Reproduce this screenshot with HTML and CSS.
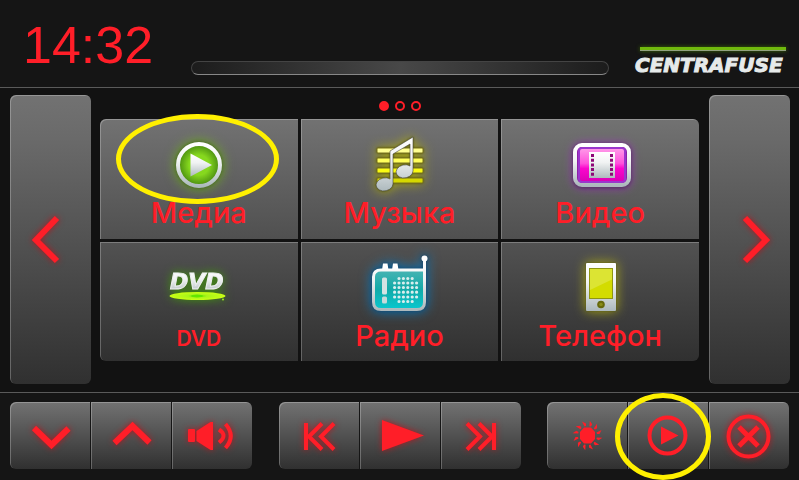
FILE: index.html
```html
<!DOCTYPE html>
<html lang="ru">
<head>
    <meta charset="UTF-8">
    <meta name="viewport" content="width=device-width, initial-scale=1.0">
    <title>Centrafuse</title>
    <link rel="stylesheet" href="styles.css">
</head>
<body>

    <svg class="defs" width="0" height="0" aria-hidden="true">
        <defs>
            <linearGradient id="silver" x1="0" y1="0" x2="0" y2="1">
                <stop offset="0" stop-color="#fff"/>
                <stop offset="0.4" stop-color="#f1f3f3"/>
                <stop offset="1" stop-color="#adb9bd"/>
            </linearGradient>
            <radialGradient id="green">
                <stop offset="0.5" stop-color="#86d81e"/>
                <stop offset="1" stop-color="#4c9011"/>
            </radialGradient>
            <linearGradient id="pink" x1="0" y1="0" x2="0" y2="1">
                <stop offset="0" stop-color="#ff9de9"/>
                <stop offset="0.45" stop-color="#ff52dc"/>
                <stop offset="0.6" stop-color="#fb06cc"/>
                <stop offset="1" stop-color="#d900b5"/>
            </linearGradient>
            <linearGradient id="teal" x1="0" y1="0" x2="0" y2="1">
                <stop offset="0" stop-color="#67b9b9"/>
                <stop offset="0.6" stop-color="#12aaa8"/>
                <stop offset="1" stop-color="#08c8cf"/>
            </linearGradient>
            <radialGradient id="disc">
                <stop offset="0.1" stop-color="#62e600"/>
                <stop offset="0.35" stop-color="#a9f51a"/>
                <stop offset="1" stop-color="#caff14"/>
            </radialGradient>
        </defs>
    </svg>

    <header class="header">
        <time class="clock">14:32</time>
        <div class="progress"></div>
        <div class="logo">CENTRAFUSE</div>
    </header>

    <main class="main">
        <button type="button" class="side" aria-label="Назад">
            <svg class="glow" width="81" height="60" viewBox="0 0 81 60"><path d="M47 8 26 30 47 51" fill="none" stroke="#ff1e28" stroke-width="6"/></svg>
        </button>

        <div class="center">
            <div class="dots">
                <span class="dot active"></span>
                <span class="dot"></span>
                <span class="dot"></span>
            </div>
            <div class="tiles">
                <button type="button" class="tile">
                    <svg class="icon-green" width="100" height="78" viewBox="0 0 100 78">
                        <circle cx="50" cy="46" r="20" fill="url(#green)"/>
                        <circle cx="50" cy="46" r="21" fill="none" stroke="url(#silver)" stroke-width="4"/>
                        <path d="M41.5 34.5 63 46 41.5 57.5z" fill="url(#silver)"/>
                    </svg>
                    <span class="label">Медиа</span>
                    <span class="mark mark-media"></span>
                </button>
                <button type="button" class="tile">
                    <svg class="icon-yellow" width="100" height="78" viewBox="0 0 100 78">
                        <g stroke="#77701c" stroke-width="1">
                            <rect x="28" y="29" width="46" height="5" rx="1" fill="#ffff91"/>
                            <rect x="28" y="39" width="46" height="5" rx="1" fill="#ffff5c"/>
                            <rect x="28" y="49" width="46" height="5" rx="1" fill="#f9fb12"/>
                            <rect x="28" y="59" width="46" height="5" rx="1" fill="#d5d800"/>
                        </g>
                        <path d="M41 32 64 18V52A8.5 6.5 -10 1 1 61 47V25L44 35V65A8.5 6.5 -10 1 1 41 60z" fill="url(#silver)" stroke="#4a4a3c" stroke-opacity="0.6" stroke-width="1"/>
                    </svg>
                    <span class="label">Музыка</span>
                </button>
                <button type="button" class="tile">
                    <svg class="icon-violet" width="100" height="78" viewBox="0 0 100 78">
                        <rect x="25" y="26" width="54" height="40" rx="7" fill="#8d1fa8" stroke="url(#silver)" stroke-width="4"/>
                        <rect x="29" y="29" width="46" height="34" rx="3" fill="url(#pink)" stroke="#9b35cc" stroke-width="2"/>
                        <rect x="39" y="33" width="26" height="26" fill="url(#silver)"/>
                        <path d="M42.5 35V58M61.5 35V58" stroke="#8e0877" stroke-width="3" stroke-dasharray="3 1.7"/>
                    </svg>
                    <span class="label">Видео</span>
                </button>
                <button type="button" class="tile">
                    <svg class="icon-lime" width="100" height="78" viewBox="0 0 100 78">
                        <ellipse cx="48.5" cy="54" rx="28" ry="4" fill="url(#disc)"/>
                        <ellipse cx="48" cy="54" rx="6" ry="1.5" fill="#62e600"/>
                        <circle cx="74" cy="57.5" r="1" fill="#9df01d"/>
                        <text class="dvd-text" x="21" y="47">DVD</text>
                    </svg>
                    <span class="label label-small">DVD</span>
                </button>
                <button type="button" class="tile">
                    <svg class="icon-blue" width="100" height="78" viewBox="0 0 100 78">
                        <path d="M33 28 34 21.5H38.5L39.5 28zM43 28 44 21.5H48.5L49.5 28z" fill="#fff"/>
                        <path d="M75.5 28H32Q24.5 28 24.5 35V60Q24.5 67.5 32 67.5H68Q75.5 67.5 75.5 60V17" fill="url(#teal)" stroke="url(#silver)" stroke-width="3"/>
                        <circle cx="75.5" cy="16.5" r="3" fill="#fff"/>
                        <rect x="33" y="35.5" width="5" height="17" rx="1.5" fill="#d3e3e3"/>
                        <rect x="33" y="54.5" width="5" height="7" rx="1.5" fill="#c5dada"/>
                        <path d="M50 36.5H64M45.6 41H68.2M45.6 45.5H68.2M45.6 50.2H68.2M45.6 55H68.2M50 59.5H64" fill="none" stroke="#d9eeee" stroke-width="3.2" stroke-linecap="round" stroke-dasharray="0 4.4"/>
                    </svg>
                    <span class="label">Радио</span>
                </button>
                <button type="button" class="tile">
                    <svg class="icon-yellow" width="100" height="78" viewBox="0 0 100 78">
                        <rect x="36" y="21" width="30" height="48" rx="1" fill="url(#silver)"/>
                        <rect x="39.5" y="26.5" width="23" height="30" fill="#d3dc00" stroke="#8f9610" stroke-width="1"/>
                        <path d="M40 27H62V37.5L40 48z" fill="#dce433"/>
                        <circle cx="51" cy="62.5" r="3.8" fill="#66690c"/>
                        <circle cx="51" cy="62.5" r="1.8" fill="#8a8d18"/>
                    </svg>
                    <span class="label">Телефон</span>
                </button>
            </div>
        </div>

        <button type="button" class="side" aria-label="Вперёд">
            <svg class="glow" width="81" height="60" viewBox="0 0 81 60"><path d="M36 8 57 30 36 51" fill="none" stroke="#ff1e28" stroke-width="6"/></svg>
        </button>
    </main>

    <footer class="footer">
        <div class="group">
            <button type="button" class="btn" aria-label="Тише">
                <svg class="glow" width="80" height="67" viewBox="0 0 80 67"><path d="M24 26 41.5 43 58.5 26.5" fill="none" stroke="#ff1e28" stroke-width="6"/></svg>
            </button>
            <button type="button" class="btn" aria-label="Громче">
                <svg class="glow" width="80" height="67" viewBox="0 0 80 67"><path d="M23.5 41 41.5 24 58.5 40.5" fill="none" stroke="#ff1e28" stroke-width="6"/></svg>
            </button>
            <button type="button" class="btn" aria-label="Звук">
                <svg class="glow" width="80" height="67" viewBox="0 0 80 67">
                    <rect x="16" y="27" width="7" height="13" rx="1" fill="#ff1e28"/>
                    <path d="M24.5 29 38.5 20H41V48H38.5L24.5 39z" fill="#ff1e28"/>
                    <path d="M47 27.5Q56 33.5 47 40.5" fill="none" stroke="#ff1e28" stroke-width="4"/>
                    <path d="M53.5 22Q64 34 53.5 46" fill="none" stroke="#ff1e28" stroke-width="4"/>
                </svg>
            </button>
        </div>
        <div class="group">
            <button type="button" class="btn" aria-label="Предыдущий">
                <svg class="glow" width="80" height="67" viewBox="0 0 80 67">
                    <path d="M27 21V48M43 21.5 30 34.5 43 47.5M55 21.5 42 34.5 55 47.5" fill="none" stroke="#ff1e28" stroke-width="4"/>
                </svg>
            </button>
            <button type="button" class="btn" aria-label="Воспроизвести">
                <svg class="glow" width="80" height="67" viewBox="0 0 80 67"><path d="M22 18 64 33.5 22 49z" fill="#ff1e28"/></svg>
            </button>
            <button type="button" class="btn" aria-label="Следующий">
                <svg class="glow" width="80" height="67" viewBox="0 0 80 67">
                    <path d="M53 21V48M38 21.5 51 34.5 38 47.5M26 21.5 39 34.5 26 47.5" fill="none" stroke="#ff1e28" stroke-width="4"/>
                </svg>
            </button>
        </div>
        <div class="group">
            <button type="button" class="btn" aria-label="Яркость">
                <svg width="80" height="67" viewBox="0 0 80 67" fill="#ff1e28">
                    <path d="M37 25.5H44L48 30V37L44 41.5H37L33 37V30z"/>
                    <g transform="translate(40.5 33.5)">
                        <path id="ray" d="M-5.5-14-1.5-12-1.5-9.5-3-9z"/>
                        <use href="#ray" transform="rotate(30)"/>
                        <use href="#ray" transform="rotate(60)"/>
                        <use href="#ray" transform="rotate(90)"/>
                        <use href="#ray" transform="rotate(120)"/>
                        <use href="#ray" transform="rotate(150)"/>
                        <use href="#ray" transform="rotate(180)"/>
                        <use href="#ray" transform="rotate(210)"/>
                        <use href="#ray" transform="rotate(240)"/>
                        <use href="#ray" transform="rotate(270)"/>
                        <use href="#ray" transform="rotate(300)"/>
                        <use href="#ray" transform="rotate(330)"/>
                    </g>
                </svg>
            </button>
            <button type="button" class="btn" aria-label="Медиаплеер">
                <svg width="80" height="67" viewBox="0 0 80 67">
                    <circle cx="39.5" cy="33.5" r="18" fill="none" stroke="#ff1e28" stroke-width="4"/>
                    <path d="M33 24.5 50.5 33.5 33 42.5z" fill="#ff1e28"/>
                </svg>
                <span class="mark mark-player"></span>
            </button>
            <button type="button" class="btn" aria-label="Закрыть">
                <svg class="glow" width="80" height="67" viewBox="0 0 80 67">
                    <circle cx="39.5" cy="34.5" r="20" fill="none" stroke="#ff1e28" stroke-width="4"/>
                    <path d="M30 25 49 44M49 25 30 44" stroke="#ff1e28" stroke-width="5"/>
                </svg>
            </button>
        </div>
    </footer>

</body>
</html>
```

FILE: styles.css
```css
* {
    box-sizing: border-box;
}
body {
    font-family: "Liberation Sans", Arial, sans-serif;
    background-color: #121212;
    color: #ff1e28;
    margin: 0;
    min-height: 100vh;
    display: flex;
    flex-direction: column;
    overflow: hidden;
}
.defs {
    position: absolute;
}
button {
    font-family: inherit;
    color: inherit;
    border: none;
    padding: 0;
    cursor: pointer;
}
svg {
    display: block;
    overflow: visible;
}

/* Header */
.header {
    display: flex;
    align-items: flex-end;
    padding: 16px 13px 12px 23px;
    background-color: #151515;
    border-bottom: 1px solid #5a5a5a;
}
.clock {
    font-size: 52px;
    line-height: 58px;
    height: 59px;
}
.progress {
    flex: 1;
    height: 14px;
    margin: 0 26px 0 38px;
    border: 1px solid #444;
    border-bottom-color: #888;
    border-radius: 7px;
    background: linear-gradient(to right, #1c1c1c, #484848 50%, #1c1c1c);
}
.logo {
    width: 151px;
    padding-top: 7px;
    font-family: "DejaVu Sans", sans-serif;
    font-size: 20px;
    line-height: 20px;
    font-weight: bold;
    font-style: italic;
    color: #e6eaea;
    -webkit-text-stroke: 1px #e6eaea;
    position: relative;
}
.logo::before {
    content: "";
    position: absolute;
    top: -1px;
    left: 5px;
    right: 0;
    height: 3px;
    background-color: #70b90d;
    border-bottom: 1px solid #91a180;
    box-shadow: 0 0 4px #3b6a00;
}

/* Home screen */
.main {
    flex: 1;
    display: flex;
    gap: 9px;
    padding: 7px 9px 8px 10px;
}
.side {
    width: 81px;
    display: flex;
    align-items: center;
    border-radius: 6px;
    background: linear-gradient(#727272, #6a6a6a 15%, #303030);
    box-shadow: inset 1px 1px 0 rgba(255, 255, 255, 0.25);
}
.center {
    flex: 1;
    display: flex;
    flex-direction: column;
    padding: 0 1px 23px 0;
}
.dots {
    display: flex;
    justify-content: center;
    gap: 6px;
    height: 24px;
    padding-top: 6px;
}
.dot {
    width: 10px;
    height: 10px;
    border: 2px solid #ff1e28;
    border-radius: 50%;
}
.dot.active {
    background-color: #ff1e28;
}
.tiles {
    flex: 1;
    display: grid;
    grid-template-columns: repeat(3, 1fr);
    grid-template-rows: repeat(2, 1fr);
    gap: 3px;
}
.tile {
    position: relative;
    display: flex;
    flex-direction: column;
    align-items: center;
    background: linear-gradient(#727272, #505050);
    box-shadow: inset 1px 1px 0 rgba(255, 255, 255, 0.25);
}
.tile:nth-child(n+4) {
    background: linear-gradient(#525252, #303030);
}
.tile:nth-child(1) {
    border-top-left-radius: 6px;
}
.tile:nth-child(3) {
    border-top-right-radius: 6px;
}
.tile:nth-child(4) {
    border-bottom-left-radius: 6px;
}
.tile:nth-child(6) {
    border-bottom-right-radius: 6px;
}
.label {
    font-family: Inter, Arial, sans-serif;
    font-size: 29px;
    line-height: 32px;
    font-weight: 500;
}
.label-small {
    font-size: 21px;
    line-height: 38px;
    font-weight: 600;
}
.dvd-text {
    font-family: "DejaVu Sans", sans-serif;
    font-size: 22px;
    font-weight: bold;
    font-style: italic;
    fill: url(#silver);
    stroke: #eef0f0;
    stroke-width: 1px;
}

/* Icon glow */
.icon-green {
    filter: drop-shadow(0 0 2px #3c5c18) drop-shadow(0 0 6px #6fae1f);
}
.icon-yellow {
    filter: drop-shadow(0 0 1px #55550a) drop-shadow(0 0 6px #a9a713);
}
.icon-violet {
    filter: drop-shadow(0 1px 2px #4a2a55) drop-shadow(0 0 4px #9440ad);
}
.icon-lime {
    filter: drop-shadow(0 0 5px #3f9a06);
}
.icon-blue {
    filter: drop-shadow(0 0 2px #0b3f66) drop-shadow(0 0 6px #0a78bd);
}
.glow {
    filter: drop-shadow(0 0 3px #b01820);
}

/* Bottom bar */
.footer {
    display: flex;
    justify-content: space-between;
    padding: 9px 10px 11px;
    background-color: #151515;
    border-top: 1px solid #5a5a5a;
}
.group {
    display: flex;
    gap: 1px;
}
.btn {
    position: relative;
    background: linear-gradient(#727272, #303030);
    box-shadow: inset 1px 1px 0 rgba(255, 255, 255, 0.25);
}
.btn:first-child {
    border-radius: 6px 0 0 6px;
}
.btn:last-child {
    border-radius: 0 6px 6px 0;
}

/* Yellow outlines round the player buttons */
.mark {
    position: absolute;
    z-index: 1;
    border: 5px solid #fff000;
    border-radius: 50%;
    pointer-events: none;
}
.mark-media {
    top: -5px;
    left: 16px;
    width: 163px;
    height: 90px;
}
.mark-player {
    top: -9px;
    left: -13px;
    width: 96px;
    height: 87px;
}
```
